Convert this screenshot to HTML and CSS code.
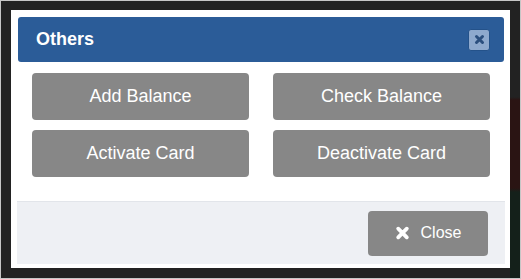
FILE: index.html
```html
<!DOCTYPE html>
<html>
<head>
<meta charset="utf-8">
<link rel="stylesheet" href="styles.css">
</head>
<body>
<div class="modal">
  <div class="modal-header">
    <span class="modal-title">Others</span>
    <button class="hdr-close" aria-label="close">
      <svg width="11" height="11" viewBox="0 0 11 11"><path d="M2.5 2.5 L8.5 8.5 M8.5 2.5 L2.5 8.5" stroke="#2b4f7e" stroke-width="3" stroke-linecap="round"/></svg>
    </button>
  </div>
  <div class="modal-body">
    <button class="act">Add Balance</button>
    <button class="act">Check Balance</button>
    <button class="act">Activate Card</button>
    <button class="act">Deactivate Card</button>
  </div>
  <div class="modal-footer">
    <button class="close-btn">
      <svg width="15" height="14" viewBox="0 0 15 14"><path d="M3.2 2.7 L11.8 11.3 M11.8 2.7 L3.2 11.3" stroke="#fff" stroke-width="3.8" stroke-linecap="round"/></svg>
      <span>Close</span>
    </button>
  </div>
</div>
</body>
</html>
```
FILE: styles.css
```css
html, body {
  margin: 0;
  padding: 0;
}
body {
  width: 521px;
  height: 279px;
  box-sizing: border-box;
  border: 1px solid #c6c6c6;
  background:
    linear-gradient(to bottom, transparent 0, transparent 97px, #2a1413 100px, #2a1413 188px, #14201a 192px, #14201a 100%) right top / 11px 100% no-repeat,
    #222;
  padding: 9px 0 0 10px;
  font-family: "Liberation Sans", Arial, sans-serif;
}
.modal {
  width: 499px;
  height: 258px;
  box-sizing: border-box;
  background: #fff;
  padding: 7px 6px 4px 7px;
  display: flex;
  flex-direction: column;
}
.modal-header {
  height: 45px;
  background: #2b5c98;
  border-radius: 3px;
  display: flex;
  align-items: center;
  justify-content: space-between;
  padding: 0 14px 0 18px;
  box-sizing: border-box;
  flex: none;
}
.modal-title {
  color: #fff;
  font-weight: bold;
  font-size: 18px;
}
.hdr-close {
  width: 22px;
  height: 22px;
  padding: 0;
  border: 1px solid #24528a;
  border-radius: 3px;
  background: #8ea9cd;
  display: flex;
  align-items: center;
  justify-content: center;
}
.modal-body {
  display: grid;
  grid-template-columns: 217px 217px;
  grid-auto-rows: 47px;
  column-gap: 24px;
  row-gap: 10px;
  padding: 0 14px;
  margin: 11px 0 24px;
}
.act {
  border: none;
  border-radius: 4px;
  background: #878787;
  color: #fff;
  font-family: "Liberation Sans", Arial, sans-serif;
  font-size: 18px;
  padding: 0;
}
.modal-footer {
  height: 63px;
  box-sizing: border-box;
  margin: 0 -1px;
  background: #eef0f4;
  border-top: 1px solid #e2e5ea;
  display: flex;
  justify-content: flex-end;
  align-items: center;
  padding: 0 17px;
}
.close-btn {
  width: 120px;
  height: 45px;
  border: none;
  border-radius: 4px;
  background: #878787;
  color: #fff;
  font-family: "Liberation Sans", Arial, sans-serif;
  font-size: 16px;
  display: flex;
  align-items: center;
  justify-content: center;
  gap: 11px;
  padding: 0;
}
.close-btn svg {
  flex: none;
}
```
